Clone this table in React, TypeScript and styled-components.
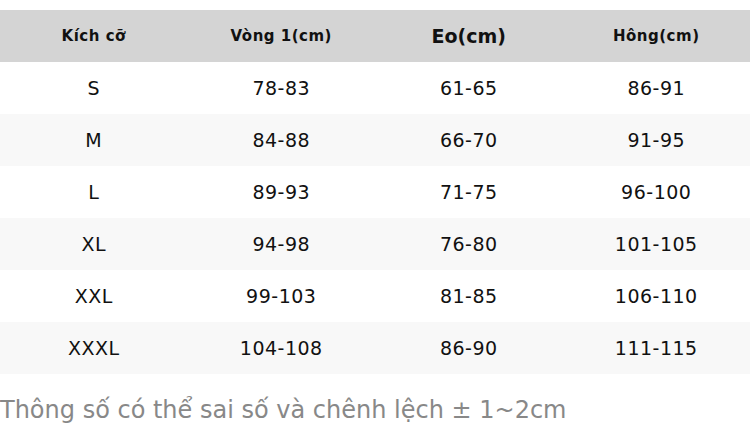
import styled, { createGlobalStyle } from 'styled-components';

const GlobalStyle = createGlobalStyle`
	html, body {
		margin: 0;
		padding: 0;
		background: #ffffff;
		font-family: 'DejaVu Sans', sans-serif;
	}
`;

interface SizeRow {
	size: string;
	bust: string;
	waist: string;
	hip: string;
}

const rows: SizeRow[] = [
	{ size: 'S', bust: '78-83', waist: '61-65', hip: '86-91' },
	{ size: 'M', bust: '84-88', waist: '66-70', hip: '91-95' },
	{ size: 'L', bust: '89-93', waist: '71-75', hip: '96-100' },
	{ size: 'XL', bust: '94-98', waist: '76-80', hip: '101-105' },
	{ size: 'XXL', bust: '99-103', waist: '81-85', hip: '106-110' },
	{ size: 'XXXL', bust: '104-108', waist: '86-90', hip: '111-115' },
];

export default function App() {
	return (
		<>
			<GlobalStyle />
			<Wrapper>
				<SizeTable>
					<thead>
						<tr>
							<HeadCell>Kích cỡ</HeadCell>
							<HeadCell>Vòng 1(cm)</HeadCell>
							<HeadCell $large>Eo(cm)</HeadCell>
							<HeadCell>Hông(cm)</HeadCell>
						</tr>
					</thead>
					<tbody>
						{rows.map((r, i) => (
							<BodyRow key={r.size} $striped={i % 2 === 1}>
								<Cell>{r.size}</Cell>
								<Cell>{r.bust}</Cell>
								<Cell>{r.waist}</Cell>
								<Cell>{r.hip}</Cell>
							</BodyRow>
						))}
					</tbody>
				</SizeTable>
				<Note>Thông số có thể sai số và chênh lệch ± 1~2cm</Note>
			</Wrapper>
		</>
	);
}

const Wrapper = styled.div`
	padding-top: 10px;
	width: 750px;
`;

const SizeTable = styled.table`
	width: 100%;
	border-collapse: collapse;
	table-layout: fixed;
`;

const HeadCell = styled.th<{ $large?: boolean }>`
	height: 52px;
	padding: 0;
	background: #d4d4d4;
	color: #111;
	font-weight: 700;
	font-size: ${({ $large }) => ($large ? '19px' : '15px')};
	letter-spacing: ${({ $large }) => ($large ? '0' : '0.5px')};
	text-align: center;
	vertical-align: middle;
`;

const BodyRow = styled.tr<{ $striped: boolean }>`
	background: ${({ $striped }) => ($striped ? '#f8f8f8' : '#ffffff')};
`;

const Cell = styled.td`
	height: 52px;
	padding: 0;
	text-align: center;
	vertical-align: middle;
	font-size: 19px;
	letter-spacing: 0.5px;
	color: #111;
`;

const Note = styled.div`
	margin-top: 18px;
	font-size: 24px;
	line-height: 36px;
	color: #888;
`;
